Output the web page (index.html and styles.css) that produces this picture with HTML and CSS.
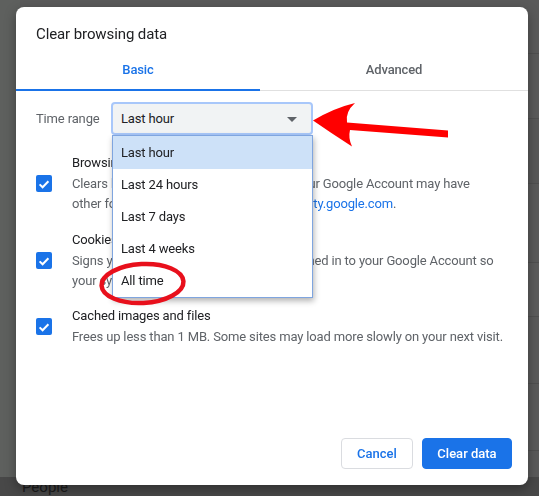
FILE: index.html
```html
<!DOCTYPE html>
<html lang="en">
<head>
  <meta charset="UTF-8">
  <title>Settings - Clear browsing data</title>
  <link rel="stylesheet" href="styles.css">
</head>
<body>
  <div class="backdrop">
    <div class="card">
      <div class="row r1"></div>
      <div class="row r2"></div>
      <div class="row r3"></div>
      <div class="row r4"></div>
      <div class="row r5"></div>
      <div class="row r6"></div>
      <div class="row r7"></div>
      <div class="row r8"></div>
    </div>
    <div class="section-title">People</div>
  </div>

  <div class="dialog">
    <div class="dialog-title">Clear browsing data</div>

    <div class="tabs">
      <div class="tab active">Basic</div>
      <div class="tab">Advanced</div>
    </div>

    <div class="dialog-body">
      <div class="time-range">
        <span class="label">Time range</span>
        <div class="select">
          <span>Last hour</span>
          <span class="caret"></span>
          <ul class="menu">
            <li class="selected">Last hour</li>
            <li>Last 24 hours</li>
            <li>Last 7 days</li>
            <li>Last 4 weeks</li>
            <li>All time</li>
          </ul>
        </div>
      </div>

      <div class="options">
        <div class="option">
          <span class="checkbox"><svg viewBox="0 0 16 16" width="16" height="16"><path d="M3.6 8.4 L6.6 11.3 L12.4 5.2" fill="none" stroke="#fff" stroke-width="2"/></svg></span>
          <div class="option-text">
            <div class="option-title">Browsing history</div>
            <div class="option-desc narrow">Clears history from all synced devices.&nbsp; Your Google Account may have other forms of browsing history at <a href="#">myactivity.google.com</a>.</div>
          </div>
        </div>
        <div class="option">
          <span class="checkbox"><svg viewBox="0 0 16 16" width="16" height="16"><path d="M3.6 8.4 L6.6 11.3 L12.4 5.2" fill="none" stroke="#fff" stroke-width="2"/></svg></span>
          <div class="option-text">
            <div class="option-title">Cookies and other site data</div>
            <div class="option-desc">Signs you out of most sites. You'll stay signed in to your Google Account so your synced data can be cleared.</div>
          </div>
        </div>
        <div class="option">
          <span class="checkbox"><svg viewBox="0 0 16 16" width="16" height="16"><path d="M3.6 8.4 L6.6 11.3 L12.4 5.2" fill="none" stroke="#fff" stroke-width="2"/></svg></span>
          <div class="option-text">
            <div class="option-title">Cached images and files</div>
            <div class="option-desc">Frees up less than 1 MB. Some sites may load more slowly on your next visit.</div>
          </div>
        </div>
      </div>
    </div>

    <div class="dialog-footer">
      <button class="btn">Cancel</button>
      <button class="btn primary">Clear data</button>
    </div>
  </div>

  <!-- hand-drawn marks on top -->
  <svg class="marks" width="539" height="496" viewBox="0 0 539 496">
    <path d="M313,120.5 Q334,108 355,103 Q345,112 347,122.5 L448,130.5 L448,137.5 L350,130 Q348,138 352,146.5 Q331,133 313,120.5 Z" fill="#ff0000"/>
    <ellipse cx="142.5" cy="283.5" rx="41" ry="19.5" fill="none" stroke="#e8101c" stroke-width="4.5" transform="rotate(-3 142.5 283.5)"/>
  </svg>
</body>
</html>
```

FILE: styles.css
```css
body { margin: 0; width: 539px; height: 496px; overflow: hidden; background: #5e605e; font-family: Roboto, "Liberation Sans", sans-serif; }

/* dimmed settings page behind the dialog */
.backdrop { display: flex; flex-direction: column; height: 496px; }
.card { margin-left: 20px; height: 485px; background: #5a5a5a; display: flex; flex-direction: column; }
.row { box-sizing: border-box; border-bottom: 1px solid #505050; }
.r1 { height: 54px; }
.r2 { height: 65px; }
.r3 { height: 65px; background: #585858; }
.r4 { height: 79px; }
.r5 { height: 54px; background: #5c5c5c; }
.r6 { height: 67px; }
.r7 { height: 67px; }
.r8 { flex: 1; border-bottom: none; }
.section-title { flex: 1; background: #484848; color: #1c1c1c; font-size: 15px; padding: 1px 0 0 22px; line-height: 18px; }

/* dialog */
.dialog {
  position: fixed; top: 7px; left: 16px; width: 512px; height: 478px;
  background: #fff; border-radius: 8px;
  box-shadow: 0 4px 12px rgba(0,0,0,.35);
  display: flex; flex-direction: column;
  letter-spacing: -0.15px;
}
.dialog-title { padding: 17px 20px 0; font-size: 15px; line-height: 20px; color: #202124; letter-spacing: -0.1px; }

.tabs { display: flex; margin-top: 6px; height: 40px; border-bottom: 1px solid #e0e0e0; }
.tab { box-sizing: border-box; display: flex; align-items: center; justify-content: center; padding-bottom: 1px; font-size: 13px; font-weight: 500; color: #5f6368; flex: 1; }
.tab.active { flex: 0 0 244px; color: #1a73e8; border-bottom: 2px solid #1a73e8; margin-bottom: -1px; padding-top: 1px; }

.dialog-body { padding: 0 20px; }
.time-range { display: flex; align-items: center; margin-top: 11px; }
.label { width: 75px; font-size: 13px; color: #5f6368; }
.select {
  position: relative; box-sizing: border-box; width: 202px; height: 33px;
  display: flex; align-items: center; padding-left: 8px;
  background: #f1f3f4; border: 2px solid #a8c7fa; border-radius: 4px;
  font-size: 13px; color: #202124;
}
.caret { position: absolute; right: 14px; top: 13px; border-left: 5px solid transparent; border-right: 5px solid transparent; border-top: 5px solid #5f6368; }

.menu {
  position: absolute; top: 31px; left: -1px; z-index: 2;
  width: 199px; margin: 0; padding: 0; list-style: none;
  background: #fff; border: 1px solid #7fa5df;
  box-shadow: 1px 3px 6px rgba(0,0,0,.3);
}
.menu li { height: 32px; line-height: 32px; padding-left: 8px; font-size: 13px; color: #202124; }
.menu li.selected { background: #cde1f8; height: 33px; line-height: 33px; }

.options { display: flex; flex-direction: column; gap: 16px; margin-top: 18px; }
.option { display: flex; align-items: center; }
.option + .option + .option { margin-top: -1px; }
.checkbox { flex: 0 0 16px; height: 17px; border-radius: 2px; background: #1a73e8; margin-right: 20px; display: flex; align-items: center; }
.option-title { font-size: 13px; line-height: 20px; color: #202124; }
.option-desc { font-size: 13px; line-height: 20px; margin-top: 1px; color: #5f6368; }
.option-desc.narrow { max-width: 415px; }
.option-desc a { color: #1a73e8; text-decoration: none; }

.dialog-footer { margin-top: auto; display: flex; justify-content: flex-end; gap: 9px; padding: 0 16px 16px; }
.btn { height: 31px; padding: 0; white-space: nowrap; border: 1px solid #dadce0; border-radius: 4px; background: #fff; color: #1a73e8; font-family: Roboto, "Liberation Sans", sans-serif; font-size: 13px; font-weight: 500; }
.btn:first-child { width: 72px; }
.btn.primary { width: 90px; background: #1a73e8; border-color: #1a73e8; color: #fff; }

.marks { position: absolute; top: 0; left: 0; pointer-events: none; }
```
